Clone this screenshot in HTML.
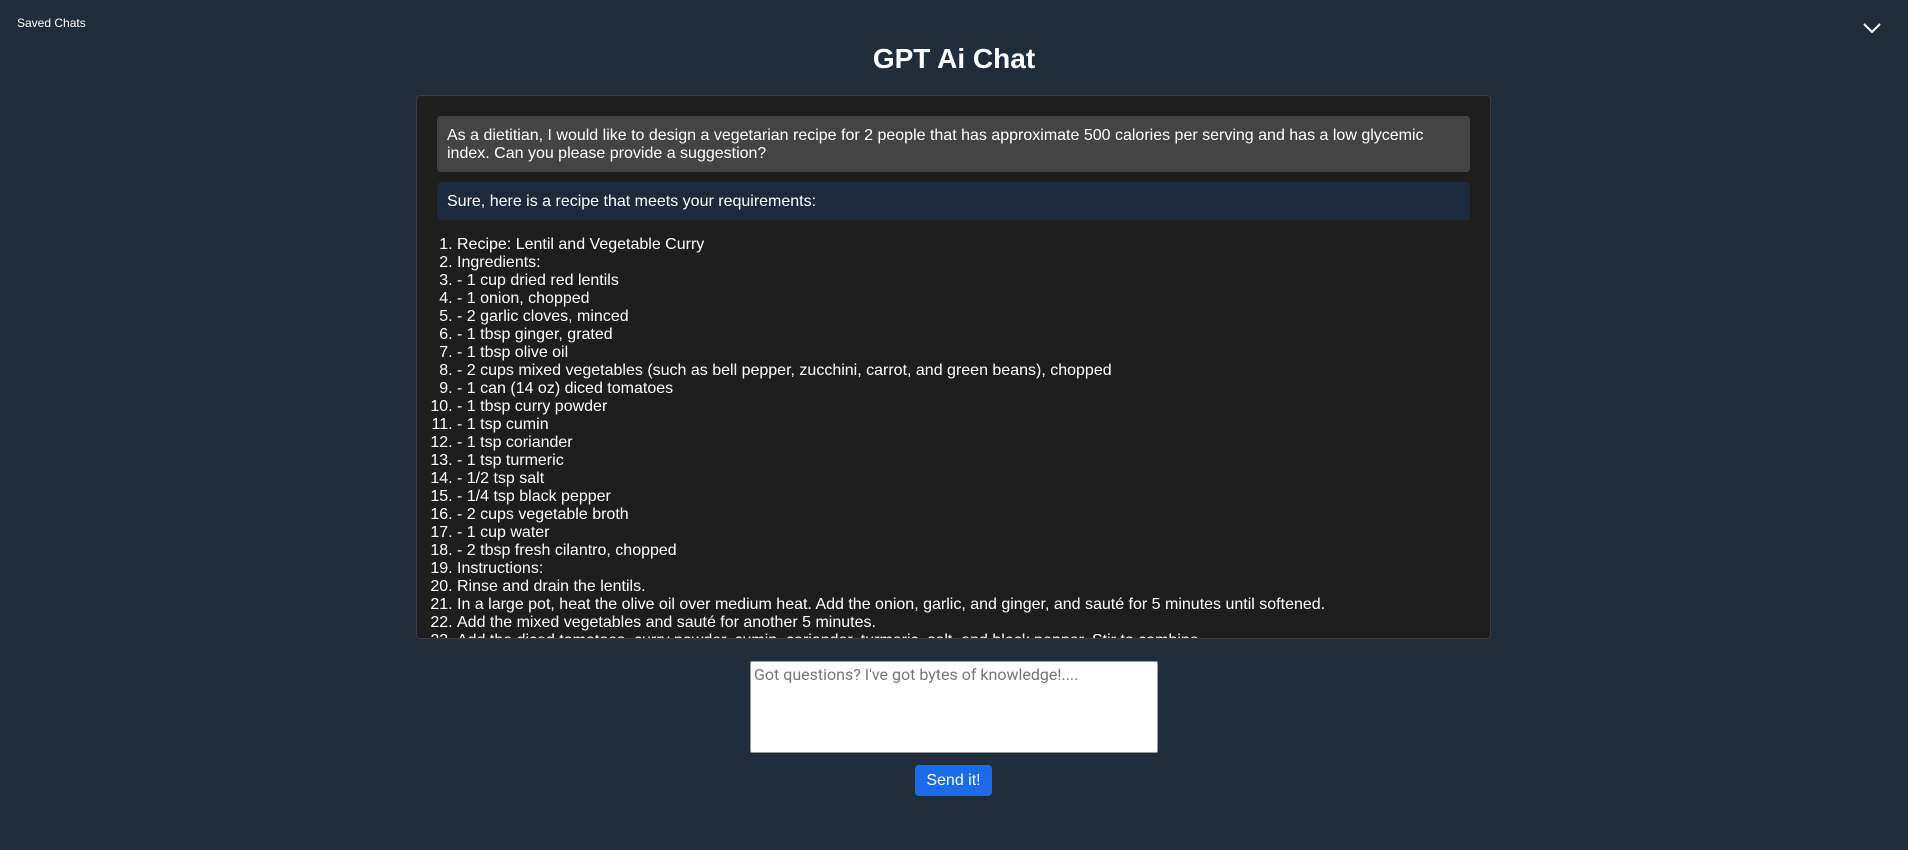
<!DOCTYPE html>
<html><head><meta charset="utf-8"><style>
html,body{margin:0;padding:0;width:1908px;height:850px;background:#222d3b;overflow:hidden;font-family:"Liberation Sans",Arial,sans-serif;color:#fff}
.saved{position:absolute;left:17px;top:16px;font-size:12px;color:#fff}
.chev{position:absolute;left:1861px;top:20px}
h1{position:absolute;left:0;right:0;top:42px;margin:0;text-align:center;font-size:28px;font-weight:bold;line-height:34px}
.panel{position:absolute;left:416px;top:95px;width:1073px;height:542px;background:#1e1e1e;border:1px solid #3a3f47;border-radius:4px;overflow:hidden;box-sizing:content-box}
.in{padding:20px 20px 0 20px}
.b{padding:11px 10px 9px;border-radius:4px;font-size:16px;line-height:18px;margin-bottom:10px}
.u{background:#444}
.a{background:#1c2a3b}
ol{margin:16px 0 0 0;padding-left:20px;font-size:16px;line-height:18px}
textarea{position:absolute;left:750px;top:661px;width:408px;height:92px;box-sizing:border-box;border:1px solid #999;border-radius:2px;background:#fff;font-family:Roboto,"Liberation Sans",sans-serif;font-size:16px;padding:3px 3px;resize:none;margin:0}
textarea::placeholder{color:#767676}
.btn{position:absolute;left:915px;top:765px;width:77px;height:31px;background:#1b6cec;border-radius:4px;color:#fff;font-size:16px;line-height:31px;text-align:center}
</style></head><body>
<div class="saved">Saved Chats</div>
<svg class="chev" width="22" height="16" viewBox="0 0 22 16"><path d="M3 4 L11 12 L19 4" fill="none" stroke="#fff" stroke-width="2"/></svg>
<h1>GPT Ai Chat</h1>
<div class="panel"><div class="in">
<div class="b u">As a dietitian, I would like to design a vegetarian recipe for 2 people that has approximate 500 calories per serving and has a low glycemic index. Can you please provide a suggestion?</div>
<div class="b a">Sure, here is a recipe that meets your requirements:</div>
<ol>
<li>Recipe: Lentil and Vegetable Curry</li>
<li>Ingredients:</li>
<li>- 1 cup dried red lentils</li>
<li>- 1 onion, chopped</li>
<li>- 2 garlic cloves, minced</li>
<li>- 1 tbsp ginger, grated</li>
<li>- 1 tbsp olive oil</li>
<li>- 2 cups mixed vegetables (such as bell pepper, zucchini, carrot, and green beans), chopped</li>
<li>- 1 can (14 oz) diced tomatoes</li>
<li>- 1 tbsp curry powder</li>
<li>- 1 tsp cumin</li>
<li>- 1 tsp coriander</li>
<li>- 1 tsp turmeric</li>
<li>- 1/2 tsp salt</li>
<li>- 1/4 tsp black pepper</li>
<li>- 2 cups vegetable broth</li>
<li>- 1 cup water</li>
<li>- 2 tbsp fresh cilantro, chopped</li>
<li>Instructions:</li>
<li>Rinse and drain the lentils.</li>
<li>In a large pot, heat the olive oil over medium heat. Add the onion, garlic, and ginger, and sauté for 5 minutes until softened.</li>
<li>Add the mixed vegetables and sauté for another 5 minutes.</li>
<li>Add the diced tomatoes, curry powder, cumin, coriander, turmeric, salt, and black pepper. Stir to combine.</li>
<li>Add the lentils, vegetable broth, and water. Bring to a boil.</li>
</ol>
</div></div>
<textarea placeholder="Got questions? I've got bytes of knowledge!...."></textarea>
<div class="btn">Send it!</div>
</body></html>
